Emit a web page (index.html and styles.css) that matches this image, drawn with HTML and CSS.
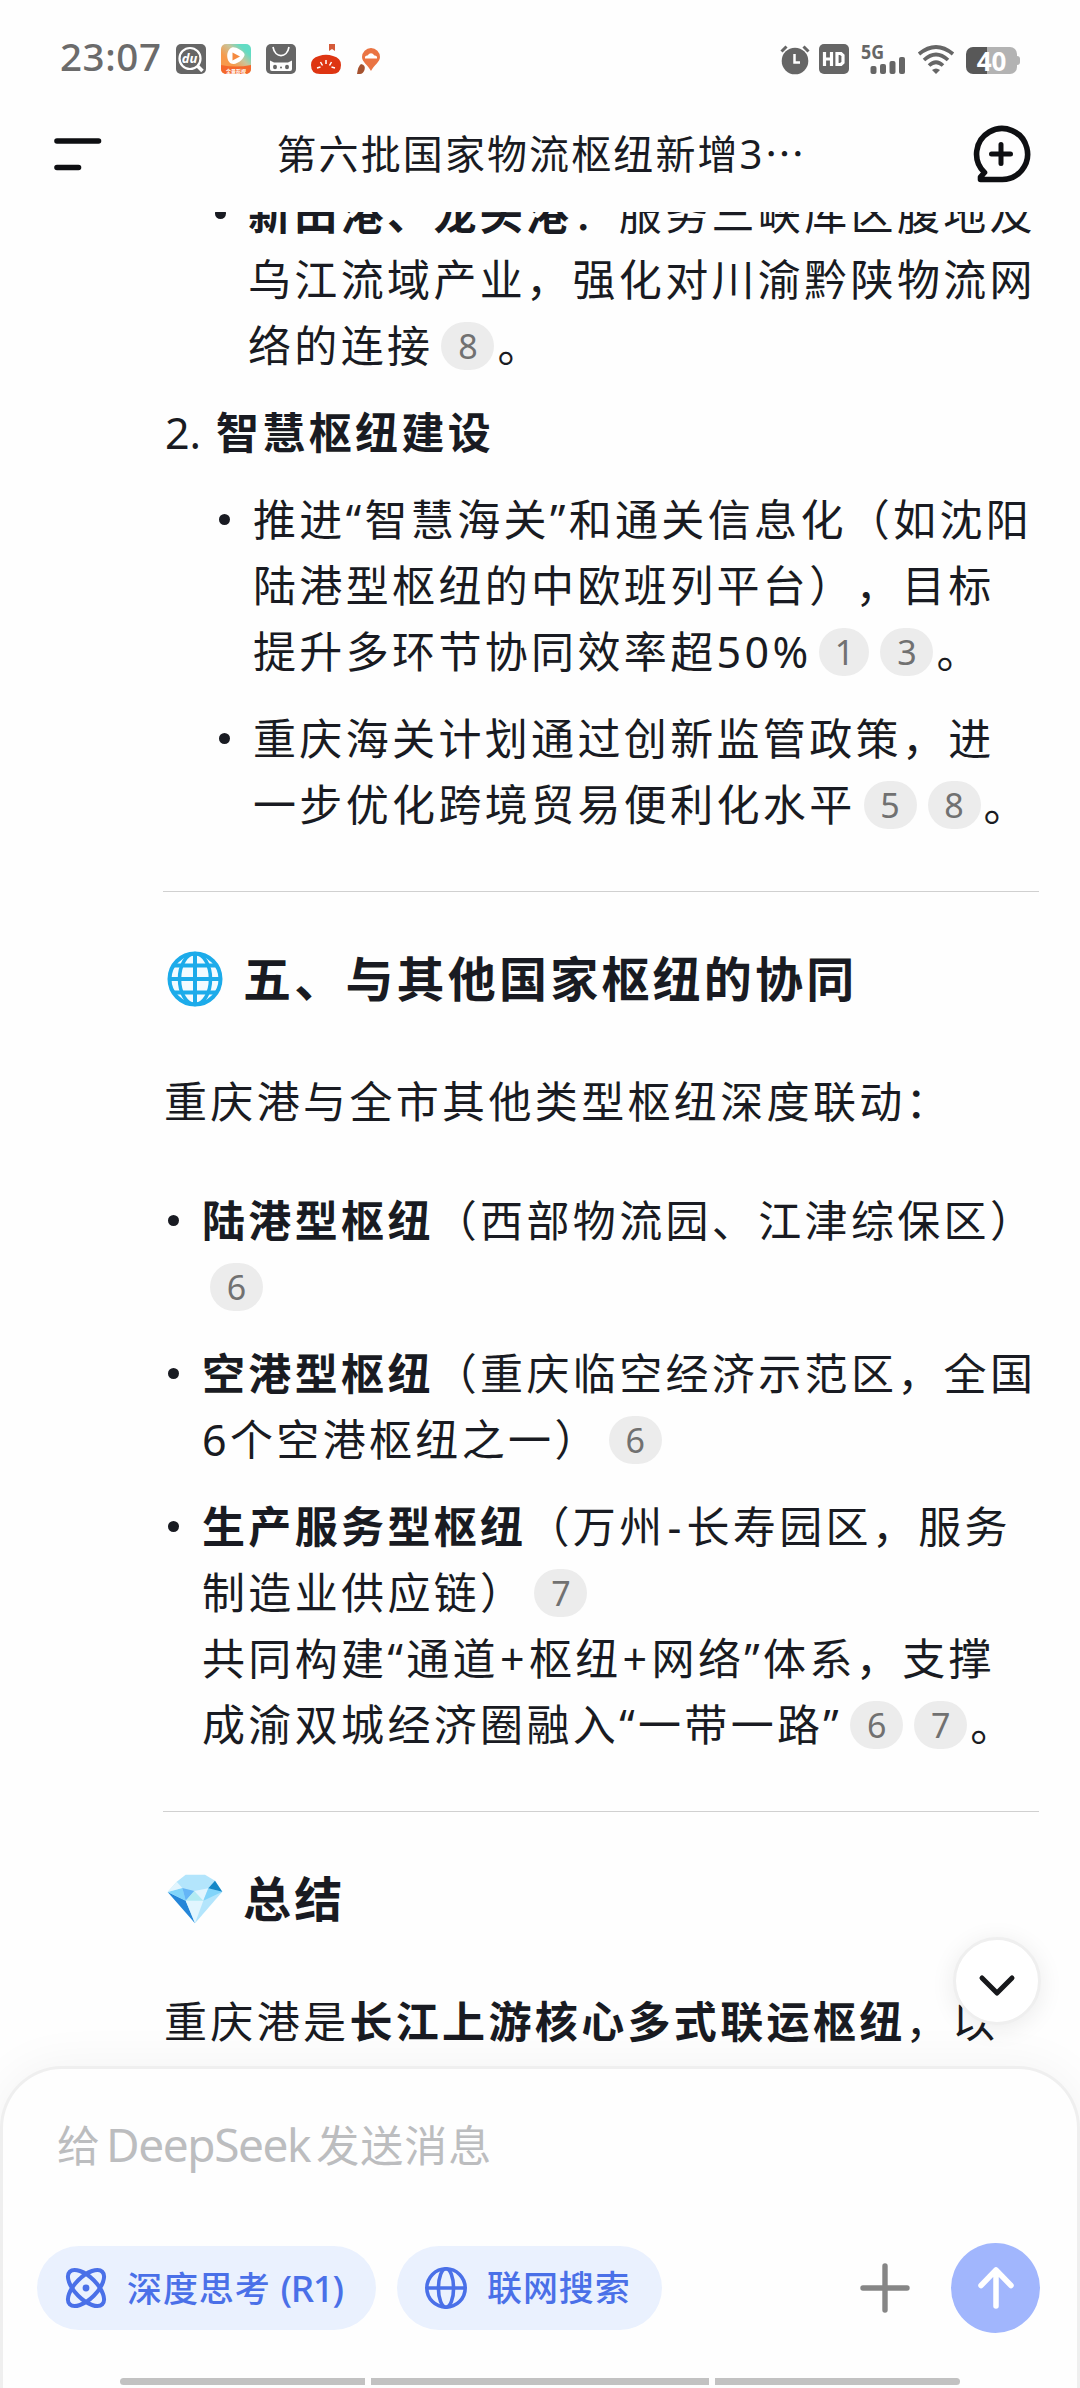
FILE: index.html
```html
<!DOCTYPE html>
<html lang="zh-CN">
<head>
<meta charset="utf-8">
<title>DeepSeek</title>
<link rel="stylesheet" href="styles.css">
</head>
<body>
<div class="screen">
  <header class="status">
    <span class="clock">23:07</span>
    <svg class="app" viewBox="0 0 30 30"><rect width="30" height="30" rx="5" fill="#666"/><circle cx="14" cy="14.500" r="10.500" fill="none" stroke="#fff" stroke-width="2.200"/><path d="M21.500 22l5 5" stroke="#fff" stroke-width="3.600"/><text x="13.500" y="19" class="du">du</text></svg>
    <svg class="app" viewBox="0 0 30 30"><defs><linearGradient id="g" x1="0" y1="1" x2="1" y2="0"><stop offset=".35" stop-color="#f79a4c"/><stop offset=".6" stop-color="#c9c49a"/><stop offset=".8" stop-color="#62dcc4"/></linearGradient></defs><rect width="30" height="30" rx="5" fill="url(#g)"/><path d="M0 21q15 3 30 0v4a5 5 0 0 1-5 5H5a5 5 0 0 1-5-5z" fill="#f4682c"/><path d="M11 3.500C13 2 22 6 23.500 10c1 3-6 10-11 10C5 20 4 6 11 3.500z" fill="#fff"/><path d="M11.500 8.500v8l7.500-4z" fill="#f58a3f"/><text x="15" y="28.500" class="tag">全景影视</text></svg>
    <svg class="app" viewBox="0 0 30 30"><rect width="30" height="30" rx="5" fill="#666"/><path d="M7 3c2 11.500 14 11.500 16 0" fill="none" stroke="#fff" stroke-width="1.700"/><path d="M4 16.500l4 2h14l4-2v8.500q0 2-2 2H6q-2 0-2-2z" fill="#fff"/><g fill="#666"><ellipse cx="9" cy="23" rx="2" ry="2.300"/><ellipse cx="21" cy="23" rx="2" ry="2.300"/><circle cx="15" cy="23.500" r="1"/></g></svg>
    <svg class="app" viewBox="0 0 30 30"><path d="M18 0h6v7l-3-2-3 2z" fill="#d45a39"/><path d="M8 12q7-2.500 14 0 8 2 8 9 0 9-9 9H9q-9 0-9-9 0-7 8-9z" fill="#de3512"/><path d="M15 16v4M9.500 18l2 3.500M20.500 18l-2 3.500M6 24l3.500-1M24 24l-3.500-1" stroke="#fff" stroke-width="1.500"/></svg>
    <svg class="app" viewBox="0 0 30 30"><path d="M15 4a9 9 0 0 1 9 9c0 5-6 8-9 14-3-6-9-9-9-14a9 9 0 0 1 9-9z" fill="#ea7443"/><path d="M9 14.500q-.500-3 2.500-3 3.500-4.500 7 0 3 0 2.500 3z" fill="#fff"/><path d="M1 30q1-8 4-10 5 1 3.500 6-1.500 4-4.500 4z" fill="#a5522f"/></svg>
    <span class="spring"></span>
    <svg class="alarm" viewBox="0 0 30 30"><circle cx="15" cy="17" r="13.300" fill="#666"/><path d="M1.500 7.500l5-5M28.500 7.500l-5-5" stroke="#666" stroke-width="3"/><path d="M14.500 10v8.500H20" fill="none" stroke="#fff" stroke-width="2.500"/></svg>
    <svg class="hd" viewBox="0 0 30 30"><rect width="30" height="30" rx="5" fill="#666"/><path d="M5.500 8v14M12.500 8v14M5.500 15h7M18 9.500h4l2 2v7l-2 2h-4z" fill="none" stroke="#fff" stroke-width="3.200"/></svg>
    <svg class="signal" viewBox="0 0 46 30"><text x="0" y="14.500" class="five" textLength="23" lengthAdjust="spacingAndGlyphs">5G</text><g fill="#666"><rect x="9.500" y="22" width="6" height="8" rx="2"/><rect x="19" y="20" width="6" height="10" rx="2"/><rect x="28.500" y="17" width="6" height="13" rx="2"/><rect x="38" y="13" width="6" height="17" rx="2"/></g></svg>
    <svg class="wifi" viewBox="0 0 36 30"><g fill="none" stroke="#666" stroke-width="3.700"><path d="M1 10Q18-4 35 10"/><path d="M6 16Q18 5 30 16"/><path d="M11 21.500Q18 15 25 21.500"/></g><path d="M14 26q4-3 8 0l-4 4z" fill="#666"/></svg>
    <div class="battery"><span>40</span></div>
  </header>
  <nav class="topbar">
    <svg class="menu" viewBox="0 0 48 34"><path d="M3 3h41.500M3 29.500h21.500" stroke="#0e0f12" stroke-width="5.600" stroke-linecap="round"/></svg>
    <h1 class="title">第六批国家物流枢纽新增3<span class="cjk">…</span></h1>
    <svg class="newchat" viewBox="0 0 58 58"><path d="M29 54.500H8.500v-2.500l4-4.500A25.500 25.500 0 1 1 29 54.500z" fill="none" stroke="#0e0f12" stroke-width="5.600" stroke-linejoin="round"/><path d="M29 19.500v19M19.500 29h19" stroke="#0e0f12" stroke-width="5" stroke-linecap="round"/></svg>
  </nav>
  <main class="chat">
    <ul class="list inner first">
      <li><div class="ln"><b>新田港、龙头港</b>：服务三峡库区腹地及</div><div class="ln">乌江流域产业，强化对川渝黔陕物流网</div><div class="ln">络的连接<i>8</i>。</div></li>
    </ul>
    <div class="ln num"><span class="n">2.</span><b>智慧枢纽建设</b></div>
    <ul class="list inner">
      <li><div class="ln">推进“智慧海关”和通关信息化（如沈阳</div><div class="ln">陆港型枢纽的中欧班列平台），目标</div><div class="ln">提升多环节协同效率超50%<i class="one">1</i><i>3</i>。</div></li>
      <li><div class="ln">重庆海关计划通过创新监管政策，进</div><div class="ln">一步优化跨境贸易便利化水平<i>5</i><i>8</i>。</div></li>
    </ul>
    <hr>
    <h2><svg class="emoji" viewBox="0 0 56 56"><circle cx="28" cy="28" r="25.500" fill="#f3fbff"/><g fill="none" stroke="#1cabea" stroke-width="4"><circle cx="28" cy="28" r="25.500"/><ellipse cx="28" cy="28" rx="15.500" ry="25.500" stroke-width="3.500"/><path d="M28 2v52M2 28h52M6 14.500h44M6 41.500h44"/></g></svg>五、与其他国家枢纽的协同</h2>
    <p class="ln">重庆港与全市其他类型枢纽深度联动：</p>
    <ul class="list outer">
      <li><div class="ln"><b>陆港型枢纽</b>（西部物流园、江津综保区）</div><div class="ln"><i>6</i></div></li>
      <li><div class="ln"><b>空港型枢纽</b>（重庆临空经济示范区，全国</div><div class="ln">6个空港枢纽之一）<i>6</i></div></li>
      <li><div class="ln"><b>生产服务型枢纽</b>（万州<span class="dash">-</span>长寿园区，服务</div><div class="ln">制造业供应链）<i>7</i></div><div class="ln">共同构建“通道<span class="plus">+</span>枢纽<span class="plus">+</span>网络”体系，支撑</div><div class="ln">成渝双城经济圈融入“一带一路”<i>6</i><i>7</i>。</div></li>
    </ul>
    <hr>
    <h2><svg class="emoji" viewBox="0 0 56 56"><path d="M18.700 3.700H38l10 6 7.300 11L28 52.300.700 21l9-10.300z" fill="#b3e5fc"/><path d="M.700 21l18 8.700L28 52.300z" fill="#2585d8"/><path d="M.700 21l14.600-4 3.400 12.700z" fill="#81d4fa"/><path d="M15.300 17l12 3-8.600 9.700z" fill="#64b5f6"/><path d="M18.700 29.700l8.600-9.700 9 9.700z" fill="#b2ebf2"/><path d="M27.300 20l14-2.700-5 12.400z" fill="#e1f5fe"/><path d="M41.300 17.300l14 3.400-19 9z" fill="#81d4fa"/><path d="M18.700 29.700h17.600L28 52.300z" fill="#e1f5fe"/><path d="M48 9.700l7.300 11-14-3.400z" fill="#1488c8"/><path d="M9.700 10.700l5.600 6.300L.700 21z" fill="#e1f5fe"/></svg>总结</h2>
    <p class="ln">重庆港是<b>长江上游核心多式联运枢纽</b>，以</p>
  </main>
  <button class="down"><svg viewBox="0 0 36 22"><path d="M3 3l15 15L33 3" fill="none" stroke="#17181b" stroke-width="5" stroke-linecap="round" stroke-linejoin="round"/></svg></button>
  <section class="composer">
    <div class="hint">给<span class="latin">DeepSeek</span>发送消息</div>
    <div class="tools">
      <div class="pill think"><svg viewBox="0 0 42 42"><g fill="none" stroke="#4a70e8" stroke-width="4"><ellipse cx="21" cy="21" rx="23" ry="11" transform="rotate(45 21 21)"/><ellipse cx="21" cy="21" rx="23" ry="11" transform="rotate(-45 21 21)"/></g><circle cx="21" cy="21" r="3.400" fill="#4a70e8"/></svg><span>深度思考 <span class="r1">(R1)</span></span></div>
      <div class="pill web"><svg viewBox="0 0 42 42"><g fill="none" stroke="#4a70e8" stroke-width="3.600"><circle cx="21" cy="21" r="19.200"/><ellipse cx="21" cy="21" rx="7.600" ry="19.200"/><path d="M2 21h38"/></g></svg><span>联网搜索</span></div>
      <span class="spring"></span>
      <svg class="add" viewBox="0 0 50 50"><path d="M25 3v44M3 25h44" stroke="#868686" stroke-width="5.400" stroke-linecap="round"/></svg>
      <div class="send"><svg viewBox="0 0 36 42"><path d="M18 39V3M3 18.500L18 3l15 15.500" fill="none" stroke="#fff" stroke-width="5.500" stroke-linecap="round" stroke-linejoin="round"/></svg></div>
    </div>
    <div class="gesture"><span></span><span></span><span></span></div>
  </section>
</div>
</body>
</html>
```

FILE: styles.css
```css
* { box-sizing: border-box; }
body { margin: 0; background: #fefefe; }
.screen {
  position: relative;
  display: flex;
  flex-direction: column;
  width: 1080px;
  height: 2388px;
  overflow: hidden;
  font-family: "Noto Sans", "Noto Sans CJK SC", sans-serif;
  color: #191b22;
  text-spacing-trim: space-all;
}
svg { display: block; flex: none; overflow: visible; }
.spring { flex: 1; }

.status { display: flex; height: 100px; padding: 44px 60px 0 60px; }
.clock { width: 116px; margin-top: -14px; font-size: 38.5px; line-height: 52px; font-weight: 500; letter-spacing: .6px; color: #6b6b6b; white-space: nowrap; }
.app { width: 30px; height: 30px; margin-right: 15px; }
.du { font: italic 700 13px "Noto Sans", sans-serif; fill: #fff; text-anchor: middle; }
.tag { font: 700 5px "Noto Sans CJK SC", sans-serif; fill: #fff; text-anchor: middle; }
.five { font: 700 20px "Noto Sans", sans-serif; fill: #666; }
.alarm { width: 30px; height: 30px; margin-right: 9px; }
.hd { width: 30px; height: 30px; margin-right: 12px; }
.signal { width: 46px; height: 30px; margin-right: 11px; }
.wifi { width: 36px; height: 30px; margin-right: 12px; }
.battery { position: relative; width: 51px; height: 27px; margin: 3px 3px 0 0; border-radius: 7px; background: linear-gradient(90deg, #585858 41%, #b3b3b3 41%); text-align: center; font-size: 26px; line-height: 28px; font-weight: 700; color: #fff; letter-spacing: 0; }
.battery::after { content: ""; position: absolute; right: -3px; top: 9px; width: 3px; height: 9px; border-radius: 0 3px 3px 0; background: #b3b3b3; }

.topbar { display: flex; align-items: center; height: 112px; padding: 0 50px 4px 54px; justify-content: space-between; }
.menu { width: 48px; height: 34px; margin-top: 2px; }
.title { width: 541px; margin: 0 0 3px 20px; font-size: 40px; line-height: 60px; font-weight: 400; letter-spacing: 2.1px; white-space: nowrap; }
.title .cjk { font-family: "Noto Sans CJK SC", sans-serif; }
.newchat { width: 58px; height: 58px; }

.chat { flex: none; height: 1854px; overflow: hidden; padding-left: 163px; }
.ln { display: flex; align-items: center; height: 66px; margin: 0; font-size: 43px; line-height: 66px; letter-spacing: 3.35px; white-space: nowrap; }
.ln i { flex: none; width: 53px; height: 48px; margin: 0 3px 0 8px; border-radius: 24px; background: #ececec; color: #717171; font-style: normal; font-size: 34px; line-height: 48px; letter-spacing: 0; text-align: center; }
.ln i.one { width: 50px; }
.list { list-style: none; margin: 0; padding: 0; }
.list li { position: relative; margin-bottom: 21px; }
.list li::before { content: ""; position: absolute; top: 27px; width: 11px; height: 11px; border-radius: 50%; background: #191b22; }
.inner { padding-left: 90px; }
.inner li::before { left: -34px; }
.first { margin-top: -31px; padding-left: 85px; }
.first li::before { left: -33px; }
.outer li::before { left: -34px; }
.outer { padding-left: 39px; }
.num { margin-bottom: 21px; padding-left: 2px; }
.num .n { width: 51px; letter-spacing: 0; }
.chat hr { width: 876px; height: 1px; margin: 53px 0 0; border: 0; background: #d0d0d0; }
.chat h2 { display: flex; align-items: center; height: 70px; margin: 52px 0 55px; padding-left: 4px; font-size: 48px; line-height: 70px; font-weight: 700; letter-spacing: 3.2px; white-space: nowrap; }
.emoji { width: 56px; height: 56px; margin-right: 20px; }
.chat p.ln { padding-left: 1px; margin-bottom: 53px; }
.dash { width: 21px; text-align: center; }
.plus { width: 30px; text-align: center; }

.down { position: absolute; left: 953px; top: 1937px; z-index: 1; display: grid; place-items: center; width: 88px; height: 88px; padding: 9px 0 0; border: 3px solid #efefef; border-radius: 50%; background: #fff; box-shadow: 0 4px 24px rgba(0,0,0,.08); }
.down svg { width: 36px; height: 22px; }

.composer { position: relative; z-index: 2; flex: none; height: 322px; padding: 45px 37px 0; border: 3px solid #efefef; border-bottom: 0; border-radius: 62px 62px 0 0; background: #fefefe; box-shadow: 0 0 50px rgba(0,0,0,.05); }
.hint { height: 60px; padding-left: 17px; font-size: 43px; line-height: 60px; letter-spacing: 1px; color: #bcbdbf; white-space: nowrap; }
.latin { margin: 0 6px 0 5px; font-size: 46px; letter-spacing: -1.4px; }
.tools { display: flex; align-items: center; height: 90px; margin: 69px 0 0 -3px; }
.pill { display: flex; align-items: center; height: 84px; border-radius: 42px; background: #eaf1fe; color: #4a70e8; font-size: 35px; line-height: 84px; font-weight: 500; letter-spacing: .9px; white-space: nowrap; }
.pill svg { width: 42px; height: 42px; margin-right: 20px; }
.think { width: 339px; padding-left: 28px; }
.web { width: 265px; margin-left: 21px; padding-left: 28px; }
.r1 { font-size: 37px; letter-spacing: -1.4px; }
.add { width: 50px; height: 50px; margin-right: 41px; }
.send { display: grid; place-items: center; width: 89px; height: 90px; border-radius: 50%; background: #a1b6fd; }
.send svg { width: 36px; height: 42px; }
.gesture { display: flex; gap: 6px; width: 840px; height: 7px; margin: 45px 0 0 80px; }
.gesture span { flex: 245; background: #c2c2c2; }
.gesture span:nth-child(2) { flex: 338; }
.gesture span:first-child { border-radius: 4px 0 0 4px; }
.gesture span:last-child { border-radius: 0 4px 4px 0; }
```
